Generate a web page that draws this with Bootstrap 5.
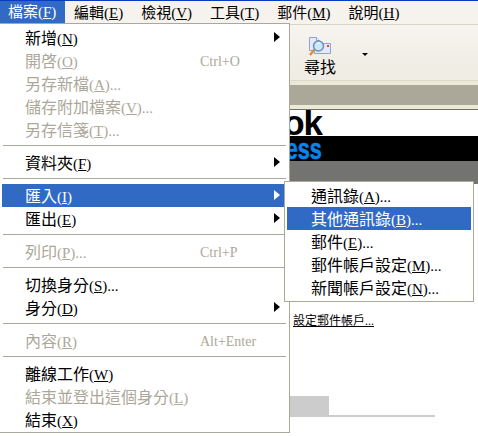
<!DOCTYPE html>
<html lang="zh-Hant">
<head>
    <meta charset="UTF-8" />
    <title>Outlook Express</title>
    <link href="https://cdn.jsdelivr.net/npm/bootstrap@5.3.3/dist/css/bootstrap.min.css" rel="stylesheet" />
    <style>
        html, body { height: 100%; }
        body {
            margin: 0;
            overflow: hidden;
            background: #fff;
            color: #000;
            font-family: "Liberation Serif", "Noto Sans CJK TC", serif;
            font-size: 16px;
            line-height: 20px;
        }
        .mn { font-size: 15px; }

        .top-line { height: 1px; background: #0a3cc0; }
        .menu-bar { height: 24px; background: #f6f3ee; border-bottom: 1px solid #d8d4c6; padding-left: 65px; font-size: 15px; }
        .menu-entry { padding: 2px 9px 0; white-space: nowrap; }
        .menu-entry.open-entry { position: absolute; left: 0; top: 1px; width: 65px; height: 22px; padding: 1px 0 0 8px; background: #316ac5; color: #fff; }

        .tool-strip { height: 56px; background: linear-gradient(#f8f5f0, #f2efe8 50%, #efece3); border-bottom: 1px solid #dcd8ca; padding-left: 304px; }
        .find-btn { width: 32px; padding-top: 12px; line-height: 17px; white-space: nowrap; }
        .find-btn svg { display: block; margin: 0 0 2px 5px; }
        .drop-tip { width: 0; height: 0; margin: 28px 0 0 26px; border: 3px solid transparent; border-top-color: #000; border-bottom: 0; }
        .band { height: 20px; background: #aca899; }
        .strip-gap { height: 4px; background: #ece9d8; }
        .band-edge { height: 5px; background: #ece9d8; border-bottom: 1px solid #716f64; }

        .logo-top { height: 26px; overflow: hidden; font: bold 35px/26px "Liberation Sans", sans-serif; text-align: right; padding-right: 156px; letter-spacing: -1px; }
        .logo-mid { height: 25px; background: #000; color: #0a84e8; text-align: right; padding-right: 156px; font: bold 30px/26px "Liberation Sans", sans-serif; }
        .logo-mid span { display: inline-block; transform: scaleX(.72); transform-origin: right center; -webkit-text-stroke: .6px #0a84e8; }
        .logo-low { height: 23px; background: #737472; }
        .setup-link { padding: 129px 0 0 293px; font-size: 12px; line-height: 16px; }
        .setup-link a { color: #000; }
        .tab-stub { margin: 67px 0 0 290px; width: 145px; height: 21px; border-bottom: 2px solid #ccc; }
        .tab-stub div { width: 39px; height: 20px; background: #ccc; }

        .dropdown-menu.win-menu {
            display: block;
            position: absolute;
            min-width: 0;
            margin: 0;
            padding: 2px;
            background: #fff;
            border: 1px solid #aca899;
            border-radius: 0;
            font-size: 16px;
        }
        .win-menu.main-menu { left: -1px; top: 23px; width: 291px; height: 410px; }
        .win-menu.sub-menu { left: 284px; top: 181px; width: 190px; height: 121px; }
        .win-menu .dropdown-item {
            display: flex;
            position: relative;
            height: 23px;
            padding: 3px 0 0 23px;
            line-height: 20px;
            color: #000;
            white-space: nowrap;
        }
        .win-menu .dropdown-item.disabled { color: #aca899; }
        .win-menu .dropdown-item.active { background: #316ac5; color: #fff; }
        .sub-menu .dropdown-item { padding-left: 24px; }
        .key-hint { position: absolute; left: 198px; top: 3px; font-size: 14px; }
        .more-tip { position: absolute; left: 272px; top: 6px; width: 0; height: 0; border-style: solid; border-width: 5px 0 5px 6px; border-color: transparent transparent transparent #000; }
        .active .more-tip { border-left-color: #fff; }
        .win-menu .dropdown-divider { height: 1px; margin: 4px 1px 5px; border: 0; border-top: 1px solid #aca899; opacity: 1; }
    </style>
</head>
<body>

<div class="top-line"></div>
<div class="menu-bar d-flex">
    <div class="menu-entry open-entry">檔案<span class="mn">(<u>F</u>)</span></div>
    <div class="menu-entry">編輯<span class="mn">(<u>E</u>)</span></div>
    <div class="menu-entry">檢視<span class="mn">(<u>V</u>)</span></div>
    <div class="menu-entry">工具<span class="mn">(<u>T</u>)</span></div>
    <div class="menu-entry">郵件<span class="mn">(<u>M</u>)</span></div>
    <div class="menu-entry">說明<span class="mn">(<u>H</u>)</span></div>
</div>

<div class="tool-strip d-flex">
    <div class="find-btn">
        <svg width="22" height="20" viewBox="0 0 22 20">
            <path d="M.5.5h7l3 3v3h11v10H5.500v-3H.5z" fill="#e4eafa" stroke="#8fa3d6" />
            <path d="M7.500.5v3h3" fill="#fff" stroke="#8fa3d6" />
            <circle cx="9.500" cy="9" r="5" fill="#c9e8fa" stroke="#6f8fb8" stroke-width="1.5" />
            <path d="M8 6.500a3 3 0 0 1 3-.5" fill="none" stroke="#fff" />
            <path d="M5.500 12.500L1 18" stroke="#d9913a" stroke-width="2.500" />
            <rect x="18" y="8" width="2" height="2" fill="#d0483c" />
        </svg>
        尋找
    </div>
    <div class="drop-tip"></div>
</div>
<div class="strip-gap"></div>
<div class="band"></div>
<div class="band-edge"></div>

<div class="logo-top">Outlook</div>
<div class="logo-mid"><span>Express</span></div>
<div class="logo-low"></div>
<div class="setup-link"><a href="#">設定郵件帳戶...</a></div>
<div class="tab-stub"><div></div></div>

<div class="dropdown-menu win-menu main-menu">
    <a class="dropdown-item" href="#">新增<span class="mn">(<u>N</u>)</span><span class="more-tip"></span></a>
    <a class="dropdown-item disabled">開啓<span class="mn">(<u>O</u>)</span><span class="key-hint">Ctrl+O</span></a>
    <a class="dropdown-item disabled">另存新檔<span class="mn">(<u>A</u>)...</span></a>
    <a class="dropdown-item disabled">儲存附加檔案<span class="mn">(<u>V</u>)...</span></a>
    <a class="dropdown-item disabled">另存信箋<span class="mn">(<u>T</u>)...</span></a>
    <hr class="dropdown-divider">
    <a class="dropdown-item" href="#">資料夾<span class="mn">(<u>F</u>)</span><span class="more-tip"></span></a>
    <hr class="dropdown-divider">
    <a class="dropdown-item active" href="#">匯入<span class="mn">(<u>I</u>)</span><span class="more-tip"></span></a>
    <a class="dropdown-item" href="#">匯出<span class="mn">(<u>E</u>)</span><span class="more-tip"></span></a>
    <hr class="dropdown-divider">
    <a class="dropdown-item disabled">列印<span class="mn">(<u>P</u>)...</span><span class="key-hint">Ctrl+P</span></a>
    <hr class="dropdown-divider">
    <a class="dropdown-item" href="#">切換身分<span class="mn">(<u>S</u>)...</span></a>
    <a class="dropdown-item" href="#">身分<span class="mn">(<u>D</u>)</span><span class="more-tip"></span></a>
    <hr class="dropdown-divider">
    <a class="dropdown-item disabled">內容<span class="mn">(<u>R</u>)</span><span class="key-hint">Alt+Enter</span></a>
    <hr class="dropdown-divider">
    <a class="dropdown-item" href="#">離線工作<span class="mn">(<u>W</u>)</span></a>
    <a class="dropdown-item disabled">結束並登出這個身分<span class="mn">(<u>L</u>)</span></a>
    <a class="dropdown-item" href="#">結束<span class="mn">(<u>X</u>)</span></a>
</div>

<div class="dropdown-menu win-menu sub-menu">
    <a class="dropdown-item" href="#">通訊錄<span class="mn">(<u>A</u>)...</span></a>
    <a class="dropdown-item active" href="#">其他通訊錄<span class="mn">(<u>B</u>)...</span></a>
    <a class="dropdown-item" href="#">郵件<span class="mn">(<u>E</u>)...</span></a>
    <a class="dropdown-item" href="#">郵件帳戶設定<span class="mn">(<u>M</u>)...</span></a>
    <a class="dropdown-item" href="#">新聞帳戶設定<span class="mn">(<u>N</u>)...</span></a>
</div>

<script src="https://cdn.jsdelivr.net/npm/bootstrap@5.3.3/dist/js/bootstrap.bundle.min.js"></script>
</body>
</html>
